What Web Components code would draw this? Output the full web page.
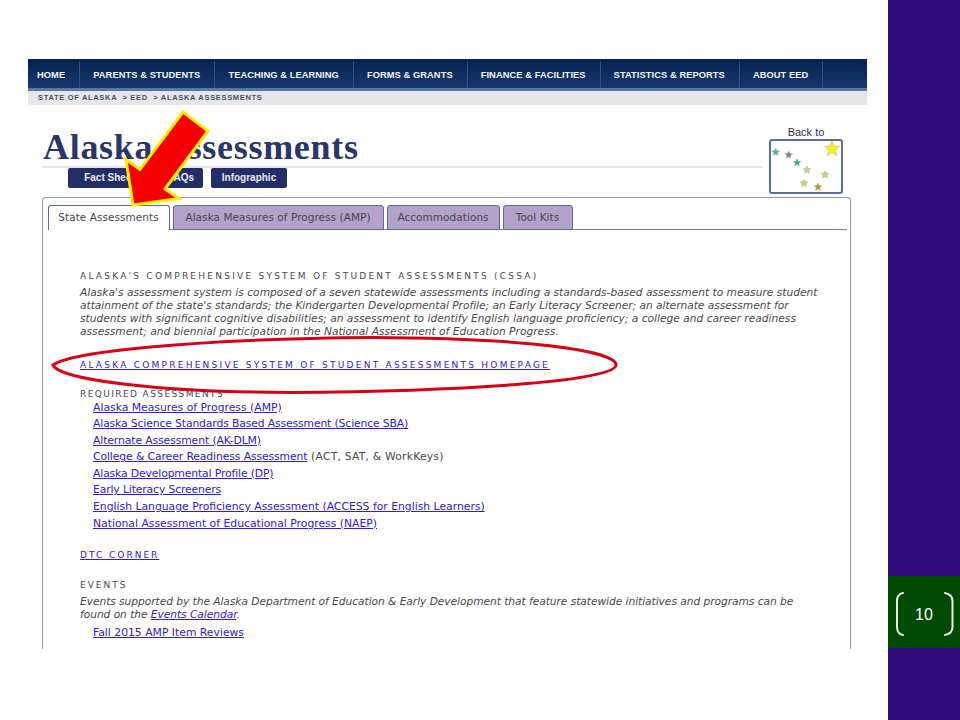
<!DOCTYPE html>
<html>
<head>
<meta charset="utf-8">
<title>Alaska Assessments slide</title>
<style>
  html, body { margin: 0; padding: 0; background: #fff; }
  a { color: #2a20d8; }
</style>
</head>
<body>
<slide-frame>
  <site-nav></site-nav>
  <page-head></page-head>
  <tab-panel>
    <sec-head>ALASKA'S COMPREHENSIVE SYSTEM OF STUDENT ASSESSMENTS (CSSA)</sec-head>
    <intro-text>Alaska's assessment system is composed of a seven statewide assessments including a standards-based assessment to measure student<br><span style="letter-spacing:-.03px">attainment of the state's standards; the Kindergarten Developmental Profile; an Early Literacy Screener; an alternate assessment for</span><br>students with significant cognitive disabilities; an assessment to identify English language proficiency; a college and career readiness<br>assessment; and biennial participation in the National Assessment of Education Progress.</intro-text>
    <sec-head link style="margin-top:21px">ALASKA COMPREHENSIVE SYSTEM OF STUDENT ASSESSMENTS HOMEPAGE</sec-head>
    <sec-head style="margin-top:16px;letter-spacing:1.4px">REQUIRED ASSESSMENTS</sec-head>
    <link-list style="margin-top:-1.5px">
      <a href="#">Alaska Measures of Progress (AMP)</a>
      <a href="#" style="letter-spacing:-.13px">Alaska Science Standards Based Assessment (Science SBA)</a>
      <a href="#" style="letter-spacing:-.1px">Alternate Assessment (AK-DLM)</a>
      <span style="letter-spacing:.2px"><a href="#" style="letter-spacing:-.1px">College &amp; Career Readiness Assessment</a> (ACT, SAT, &amp; WorkKeys)</span>
      <a href="#" style="letter-spacing:-.13px">Alaska Developmental Profile (DP)</a>
      <a href="#" style="letter-spacing:-.13px">Early Literacy Screeners</a>
      <a href="#">English Language Proficiency Assessment (ACCESS for English Learners)</a>
      <a href="#">National Assessment of Educational Progress (NAEP)</a>
    </link-list>
    <sec-head link style="margin-top:16.500px;letter-spacing:2px">DTC CORNER</sec-head>
    <sec-head style="margin-top:17px;letter-spacing:2px">EVENTS</sec-head>
    <intro-text style="letter-spacing:-.05px">Events supported by the Alaska Department of Education &amp; Early Development that feature statewide initiatives and programs can be<br>found on the <a href="#">Events Calendar</a>.</intro-text>
    <link-list style="margin-top:4px">
      <a href="#">Fall 2015 AMP Item Reviews</a>
    </link-list>
  </tab-panel>
</slide-frame>

<script>
  const LINK = '#2a20d8'
  const TEXT = '#484848'

  class SlideFrame extends HTMLElement {
    constructor() {
      super()
      this.attachShadow({ mode: 'open' })
      this.shadowRoot.innerHTML = `
      <style>
        :host { display: flex; width: 960px; height: 720px; overflow: hidden; position: relative; }
        .main { width: 888px; box-sizing: border-box; padding: 59px 21px 0 28px; }
        .side { width: 72px; background: #2e0a78; padding-top: 576px; box-sizing: border-box; }
        .num { height: 72px; box-sizing: border-box; padding-top: 5px; background: #004a06; display: flex; align-items: center; justify-content: center;
               position: relative; color: #fff; font: 16px "Liberation Sans", sans-serif; }
        .num svg { position: absolute; left: 0; top: 0; }
        .over { position: absolute; left: 0; top: 0; pointer-events: none; }
      </style>
      <div class="main"><slot></slot></div>
      <div class="side">
        <div class="num">
          <svg width="72" height="72" fill="none" stroke="#e8f0e4" stroke-width="2" stroke-linecap="round">
            <path d="M15 17 C10 18 9 21 9 25 V51 C9 55 10 58 15 59"/>
            <path d="M57 17 C62 18 64.500 21 64.500 25 V51 C64.500 55 62 58 57 59"/>
          </svg>
          <span>10</span>
        </div>
      </div>
      <svg class="over" width="960" height="720" fill="none">
        <path d="M53 365 C70 352 190 339 372 337.500 C520 338 616 350 616 365 C616 380 480 391 290 392.500 C160 392 60 380 53 365 Z" stroke="#d4001a" stroke-width="3"/>
        <polygon points="133,205 126,159.500 140,169.500 183,112 208,131 165,189 179,198.500" fill="#f40000" stroke="#ffec00" stroke-width="3" stroke-linejoin="miter"/>
      </svg>`
    }
  }

  class SiteNav extends HTMLElement {
    constructor() {
      super()
      this.attachShadow({ mode: 'open' })
      const items = ['HOME', 'PARENTS &amp; STUDENTS', 'TEACHING &amp; LEARNING', 'FORMS &amp; GRANTS', 'FINANCE &amp; FACILITIES', 'STATISTICS &amp; REPORTS', 'ABOUT EED']
      this.shadowRoot.innerHTML = `
      <style>
        :host { display: block; font: bold 9.300px "Liberation Sans", sans-serif; }
        .bar { display: flex; height: 29px; background: linear-gradient(#06214e, #163a6e); border-bottom: 3px solid #5a76a4; }
        .item { display: flex; align-items: center; padding: 0 14px 0 13px; color: #f2f4f8; white-space: nowrap; letter-spacing: .08px;
                border-right: 1px solid #34557f; margin: 2px 0 0; }
        .item:first-child { padding-left: 9px; }
        .crumb { height: 14px; box-sizing: border-box; background: #e6e6e6; color: #46506a; font-size: 7.500px; line-height: 13px; padding-left: 10px; letter-spacing: .68px; white-space: pre; }
      </style>
      <div class="bar">${items.map(t => `<div class="item">${t}</div>`).join('')}</div>
      <div class="crumb">STATE OF ALASKA  &gt; EED  &gt; ALASKA ASSESSMENTS</div>`
    }
  }

  class PageHead extends HTMLElement {
    constructor() {
      super()
      this.attachShadow({ mode: 'open' })
      const stars = [[775.7, 152.3, 4, '#38b4c4'], [788.7, 155, 4, '#8a70d0'], [797, 162.7, 4, '#28b880'],
        [807, 170, 4, '#cfcf90'], [825, 174.7, 4, '#cfcf90'], [804, 183.3, 4, '#cfcf78'], [818, 187, 4, '#c88a3c'], [832, 149, 8, '#f8f020']]
      const star = ([x, y, r, c]) => {
        let pts = []
        for (let i = 0; i < 10; i++) {
          const rad = i % 2 ? r * 0.45 : r
          const a = -Math.PI / 2 + i * Math.PI / 5
          pts.push((x - 769 + rad * Math.cos(a)).toFixed(1) + ',' + (y - 138 + rad * Math.sin(a)).toFixed(1))
        }
        return `<polygon points="${pts.join(' ')}" fill="${c}" stroke="#a8a870" stroke-width=".5"/>`
      }
      this.shadowRoot.innerHTML = `
      <style>
        :host { display: flex; height: 92px; padding-left: 14px; font-family: "Liberation Sans", sans-serif; }
        .left { width: 721px; }
        h1 { margin: 0; padding: 21px 0 0 1px; height: 63px; box-sizing: border-box; font: bold 36px/42px "Liberation Serif", serif; letter-spacing: .7px; color: #2a3568; border-bottom: 2px solid #e6e6e6; }
        .btns { display: flex; gap: 8px; padding-left: 26px; }
        .btn { height: 20px; background: #232d68; color: #e8eaf4; border-radius: 2px; font: bold 10px/20px "Liberation Sans", sans-serif; text-align: center; }
        .back { margin: 20px 0 0 6px; width: 74px; color: #232f63; font-size: 11px; text-align: center; line-height: 14px; }
        .box { display: block; width: 70px; height: 51px; border: 2px solid #5a7098; border-radius: 3px; }
      </style>
      <div class="left">
        <h1>Alaska Assessments</h1>
        <div class="btns">
          <div class="btn" style="width:83px">Fact Sheet</div>
          <div class="btn" style="width:44px">FAQs</div>
          <div class="btn" style="width:76px">Infographic</div>
        </div>
      </div>
      <div class="back">Back to
        <svg class="box" viewBox="2 3 70 51">${stars.map(star).join('')}</svg>
      </div>`
    }
  }

  class TabPanel extends HTMLElement {
    constructor() {
      super()
      this.attachShadow({ mode: 'open' })
      const tabs = [['State Assessments', 122, 1], ['Alaska Measures of Progress (AMP)', 211], ['Accommodations', 113], ['Tool Kits', 70]]
      this.shadowRoot.innerHTML = `
      <style>
        :host { display: block; margin-left: 14px; width: 809px; height: 452px; box-sizing: border-box; overflow: hidden;
                border: 1.500px solid #8d98b4; border-bottom: 0; border-radius: 4px 4px 0 0; font: 10.500px "DejaVu Sans", sans-serif; color: ${TEXT}; }
        .tabs { display: flex; gap: 3px; margin: 7px 3px 0 4.500px; height: 25px; box-sizing: border-box; border-bottom: 1px solid #6d7ea0; }
        .tab { box-sizing: border-box; height: 25px; border: 1px solid #5c6b92; border-radius: 3px 3px 0 0; background: #b3a2c9; text-align: center; line-height: 23px; letter-spacing: .05px; }
        .tab.on { background: #fff; border-bottom: 0; }
        .body { padding: 40px 0 0 37px; }
      </style>
      <div class="tabs">${tabs.map(([t, w, on]) => `<div class="tab${on ? ' on' : ''}" style="width:${w}px">${t}</div>`).join('')}</div>
      <div class="body"><slot></slot></div>`
    }
  }

  class SecHead extends HTMLElement {
    constructor() {
      super()
      this.attachShadow({ mode: 'open' })
      this.shadowRoot.innerHTML = `
      <style>
        :host { display: block; font: 9px/13px "DejaVu Sans", sans-serif; letter-spacing: 2.24px; color: ${TEXT}; white-space: nowrap; }
        :host([link]) { color: ${LINK}; text-decoration: underline; }
      </style>
      <slot></slot>`
    }
  }

  class IntroText extends HTMLElement {
    constructor() {
      super()
      this.attachShadow({ mode: 'open' })
      this.shadowRoot.innerHTML = `
      <style>
        :host { display: block; font: italic 10.670px/13px "DejaVu Sans", sans-serif; color: ${TEXT}; margin-top: 3px; white-space: nowrap; }
      </style>
      <slot></slot>`
    }
  }

  class LinkList extends HTMLElement {
    constructor() {
      super()
      this.attachShadow({ mode: 'open' })
      this.shadowRoot.innerHTML = `
      <style>
        :host { display: grid; grid-auto-rows: 16.600px; padding-left: 13px; align-items: center; font: 10.800px/16.600px "DejaVu Sans", sans-serif; white-space: nowrap; }
      </style>
      <slot></slot>`
    }
  }

  customElements.define('slide-frame', SlideFrame)
  customElements.define('site-nav', SiteNav)
  customElements.define('page-head', PageHead)
  customElements.define('tab-panel', TabPanel)
  customElements.define('sec-head', SecHead)
  customElements.define('intro-text', IntroText)
  customElements.define('link-list', LinkList)
</script>
</body>
</html>
